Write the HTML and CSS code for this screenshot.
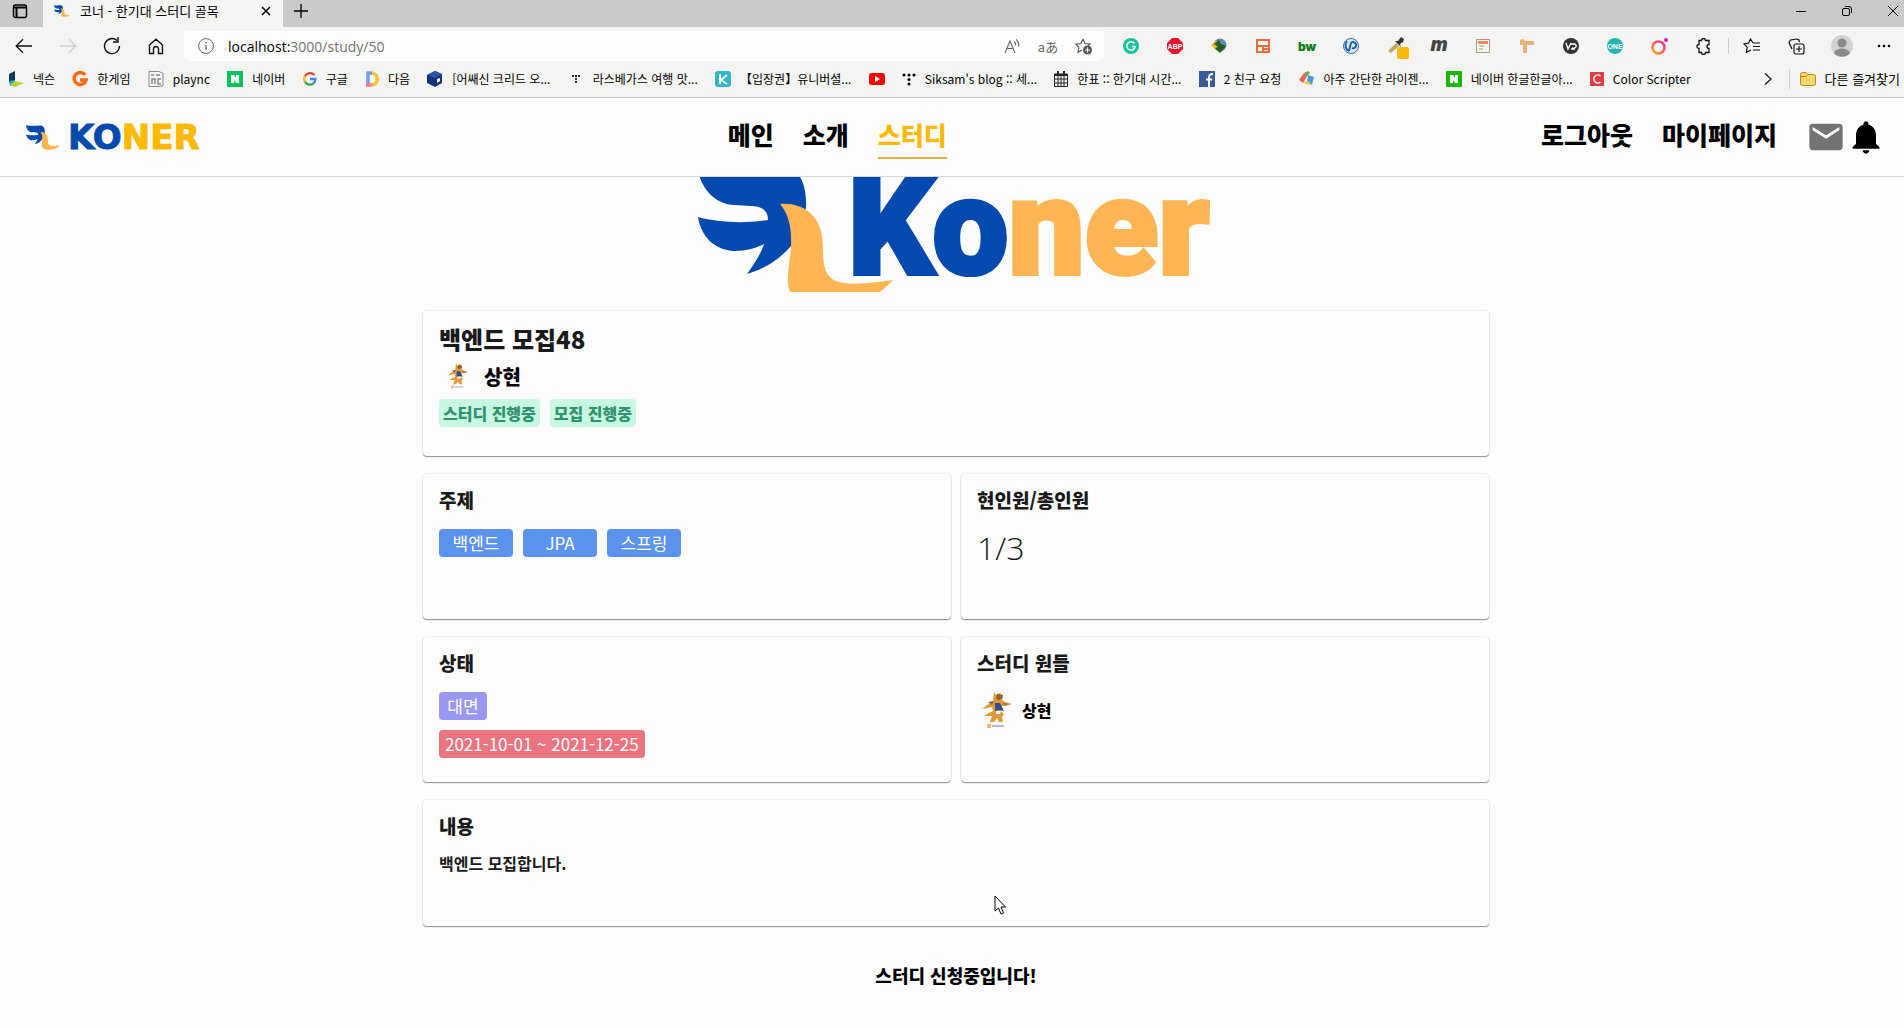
FILE: index.html
```html
<!DOCTYPE html>
<html lang="ko">
<head>
<meta charset="utf-8">
<title>코너 - 한기대 스터디 골목</title>
<link rel="stylesheet" href="styles.css">
</head>
<body>
<svg class="defs" aria-hidden="true">
  <symbol id="bird" viewBox="0 -14 196 142">
    <path fill="#0449ad" d="M0-14C2 8 16 26 37 27C50 28 60 27 66 31C70 34 71 38 71 42C45 46 20 44 1 39C4 59 18 72 37 73C50 73 59 70 67 66C64 76 57 86 50 96C68 91 84 80 94 68L109 30C110 10 104-12 84-12C50-10 20-9 0-14Z"/>
    <path fill="#ffb553" d="M83 26C104 24 122 36 125 58C127 72 124 88 132 98C142 110 172 105 196 102C183 116 168 126 138 128C112 129 92 124 91 105C90 90 95 76 94 60C94 46 90 34 83 26Z"/>
  </symbol>
  <symbol id="mascot" viewBox="0 0 32 38">
    <path fill="#e59a35" d="M13 1l2 3 4-2 3 3-1 4 3 2 7 2-6 2-5 0 0 5 3 3-2 3 1 5h-4l-2-4-3 4H9l2-6-8 0 5-3 4-2-1-4-5 1-5 1 5-4 6-3z"/>
    <path fill="#8a6236" d="M16 3l6 1-1 4-4 1-2-2zM7 11l6-1-2 4zM22 12l6 1-5 1z"/>
    <path fill="#2d4d94" d="M14 12l5 0 4 8-5-1-4 1z"/>
    <path fill="#fff" d="M15 20h5l-1 3h-4z"/>
    <path fill="#f5b27d" d="M6 33h4v4H6z"/><path fill="#b9bcd6" d="M11 34h12v2H11z"/>
  </symbol>
</svg>

<header class="browser">
  <div class="tabs">
    <button class="tab-menu" aria-label="탭 작업 메뉴"><svg width="16" height="16" viewBox="0 0 16 16" fill="none" stroke="#000" stroke-width="1.4"><rect x="1.500" y="2" width="13" height="12.500" rx="2"/><path d="M2 4.500h12M4.500 5v9" stroke-width="2"/></svg></button>
    <div class="tab">
      <svg class="tab-logo" width="16" height="14"><use href="#bird"/></svg>
      <span class="tab-title">코너 - 한기대 스터디 골목</span>
      <button aria-label="탭 닫기"><svg width="10" height="10" viewBox="0 0 10 10" stroke="#000" stroke-width="1.500"><path d="M1 1l8 8M9 1l-8 8"/></svg></button>
    </div>
    <button class="new-tab" aria-label="새 탭"><svg width="14" height="14" viewBox="0 0 14 14" stroke="#000" stroke-width="1.300"><path d="M7 0v14M0 7h14"/></svg></button>
    <div class="window-buttons">
      <button aria-label="최소화"><svg width="10" height="10" viewBox="0 0 10 10" stroke="#000"><path d="M0 5.500h10"/></svg></button>
      <button aria-label="복원"><svg width="10" height="10" viewBox="0 0 10 10" stroke="#000" fill="none"><rect x=".5" y="2.500" width="7" height="7" rx="1.500"/><path d="M3 .5h4a2.500 2.500 0 0 1 2.500 2.500v4"/></svg></button>
      <button aria-label="닫기"><svg width="10" height="10" viewBox="0 0 10 10" stroke="#000"><path d="M0 0l10 10M10 0L0 10"/></svg></button>
    </div>
  </div>

  <div class="toolbar">
    <div class="nav-buttons">
      <button aria-label="뒤로"><svg width="18" height="16" viewBox="0 0 18 16" fill="none" stroke="#111" stroke-width="1.300"><path d="M17 8H1.500M8 1.200L1.200 8 8 14.800"/></svg></button>
      <button aria-label="앞으로"><svg width="18" height="16" viewBox="0 0 18 16" fill="none" stroke="#ccc" stroke-width="1.300"><path d="M1 8h15.500M10 1.200L16.800 8 10 14.800"/></svg></button>
      <button aria-label="새로 고침"><svg width="18" height="18" viewBox="0 0 18 18" fill="none" stroke="#111" stroke-width="1.400"><path d="M16.500 9A7.500 7.500 0 1 1 14 3.500M15 0v5h-5"/></svg></button>
      <button aria-label="홈"><svg width="16" height="17" viewBox="0 0 16 17" fill="none" stroke="#111" stroke-width="1.400"><path d="M1.500 7L8 1.200 14.500 7v8.500h-4V11a2.500 2.500 0 0 0-5 0v4.500h-4z"/></svg></button>
    </div>
    <div class="address">
      <svg width="16" height="16" viewBox="0 0 16 16" fill="none" stroke="#666"><circle cx="8" cy="8" r="7.400"/><path d="M8 7v5M8 4v1.500" stroke-width="1.300"/></svg>
      <span class="url">localhost:<span class="path">3000/study/50</span></span>
      <button class="glyph" aria-label="소리내어 읽기"><svg width="16" height="16" viewBox="0 0 16 16" fill="none" stroke="#666" stroke-width="1.100"><path d="M1 15L6 3l5 12M3 10.500h6M10 3.500a4 4 0 0 1 1.500 4M12 1.500a7 7 0 0 1 2.500 7"/></svg></button>
      <button class="glyph" aria-label="번역">aあ</button>
      <button class="glyph" aria-label="즐겨찾기에 추가"><svg width="18" height="17" viewBox="0 0 18 17" fill="none" stroke="#555" stroke-width="1.100"><path d="M8 1l2 4.500 5 .5-3.500 3.500M7 12l-4 2.500.8-5L.8 6.200l5-.7L8 1"/><circle cx="12.500" cy="12" r="4.500" fill="#555" stroke="none"/><path d="M12.500 9.500v5M10 12h5" stroke="#fff"/></svg></button>
    </div>
    <div class="extensions">
      <button aria-label="Grammarly"><svg width="16" height="16" viewBox="0 0 16 16" fill="none"><circle cx="8" cy="8" r="8" fill="#15c39a"/><path d="M11.500 5.500a4.200 4.200 0 1 0 .7 3H9" stroke="#fff" stroke-width="1.500"/></svg></button>
      <button aria-label="Adblock Plus"><svg width="16" height="16" viewBox="0 0 16 16"><path d="M5 0h6l5 5v6l-5 5H5l-5-5V5z" fill="#e8142e"/><text x="8" y="10.500" text-anchor="middle" class="abp">ABP</text></svg></button>
      <button aria-label="다운로드 관리자"><svg width="16" height="16" viewBox="0 0 16 16"><circle cx="9" cy="7" r="6.500" fill="#5d88b5"/><path d="M0 7l5-4 3 1 1 8-3 1z" fill="#f0b92c"/><path d="M3 6l5-4 2 4 5 2-6 7-5-5 3-1z" fill="#255b1f"/></svg></button>
      <button aria-label="레이아웃"><svg width="14" height="14" viewBox="0 0 14 14" fill="none" stroke="#ee6c3c" stroke-width="2"><path d="M1 1h12v12H1zM1 7h12M7 7v6M7 10h6"/></svg></button>
      <button class="bw">bw</button>
      <button aria-label="동기화"><svg width="16" height="16" viewBox="0 0 16 16" fill="none"><circle cx="8" cy="8" r="7.500" fill="#dce8f2" stroke="#356ea8"/><path d="M6 13L8 5a3 3 0 1 1 1 5M4 3C1 7 3 12 6 13" stroke="#22609f" stroke-width="2"/></svg></button>
      <button class="dropper" aria-label="색상 추출"><svg width="22" height="22" viewBox="0 0 22 22"><path d="M1 14l8-8 3 3-8 7z" fill="#bba86c"/><path d="M8 4l3 0 3-4 3 2-1 3-3 2 1 3z" fill="#333"/><rect x="10" y="10" width="12" height="12" rx="2" fill="#ffb900"/></svg></button>
      <button class="m">m</button>
      <button aria-label="메모"><svg width="14" height="14" viewBox="0 0 14 14"><path fill="#f8f8ee" stroke="#aa9880" d="M.5.5h13v13H.5z"/><path d="M2 2h10v3H2z" fill="#ed876c"/><path d="M3 7h5M3 10h4" stroke="#87b775"/></svg></button>
      <button aria-label="도구"><svg width="14" height="14" viewBox="0 0 14 14"><path d="M0 1l3-1 2 2h9v4H7v8H3V6H0z" fill="#e7b17c"/></svg></button>
      <button aria-label="VD"><svg width="16" height="16" viewBox="0 0 16 16"><circle cx="8" cy="8" r="8" fill="#333"/><path d="M3 5l2 6 3-6M8 6h4c3 2 0 5-3 4M8 11h4" fill="none" stroke="#fff" stroke-width="1.400"/></svg></button>
      <button aria-label="ONE"><svg width="16" height="16" viewBox="0 0 16 16"><circle cx="8" cy="8" r="8" fill="#20b5b0"/><text x="8" y="11" text-anchor="middle" class="one">ONE</text></svg></button>
      <button aria-label="이미지 도구"><svg width="17" height="17" viewBox="0 0 17 17" fill="none"><defs><linearGradient id="ring" x1="1" y1="0" x2="0" y2="1"><stop stop-color="#e62a9b"/><stop offset="1" stop-color="#ffa51f"/></linearGradient></defs><circle cx="7.500" cy="9.500" r="6" stroke="url(#ring)" stroke-width="2.500"/><circle cx="15" cy="2" r="2" fill="#d81ba8"/></svg></button>
      <button aria-label="확장"><svg width="16" height="17" viewBox="0 0 16 17" fill="none" stroke="#111" stroke-width="1.300"><path d="M4 2.500h2.500a2 2 0 0 1 4 0H14v4a2 2 0 0 0 0 4v4h-3.500a2 2 0 0 1-4 0H4v-4a2 2 0 1 1 0-4z"/></svg></button>
    </div>
    <div class="profile">
      <button aria-label="즐겨찾기"><svg width="18" height="16" viewBox="0 0 18 16" fill="none" stroke="#111" stroke-width="1.200"><path d="M10 5L7.500 1 5.500 5.200 1 6l3.200 3.200-.7 5L8 12M10 5h7M10 8.500h7M10 12h7"/></svg></button>
      <button aria-label="컬렉션"><svg width="17" height="17" viewBox="0 0 17 17" fill="none" stroke="#111" stroke-width="1.200"><rect x="6" y="6" width="10" height="10" rx="2"/><path d="M11 8v6M8 11h6M4 11L1 4.500 2.500 2 9 1l2 1 .5 2"/></svg></button>
      <button aria-label="프로필"><svg width="22" height="22" viewBox="0 0 22 22"><circle cx="11" cy="11" r="11" fill="#d2d2d2"/><circle cx="11" cy="8" r="4.500" fill="#8b8b8b"/><path d="M3 18c2-6 14-6 16 0-4 5-12 5-16 0" fill="#8b8b8b"/></svg></button>
      <button aria-label="설정"><svg width="14" height="4" viewBox="0 0 14 4"><circle cx="2" cy="2" r="1.300"/><circle cx="7" cy="2" r="1.300"/><circle cx="12" cy="2" r="1.300"/></svg></button>
    </div>
  </div>

  <nav class="bookmarks" aria-label="즐겨찾기 모음">
    <div class="bookmark-list">
      <a href="#"><svg width="16" height="16" viewBox="0 0 16 16"><path fill="#0c3a58" d="M1 3l6-3v10l-6 1z"/><path fill="#15a6d8" d="M1 10l6-1v4l-5 2z"/><path fill="#b9d430" d="M7 10l9 2-9 4-5-2z"/></svg>넥슨</a>
      <a href="#"><svg width="16" height="16" viewBox="0 0 16 16" fill="none" stroke="#ff6a14" stroke-width="3.500"><path d="M13 4A6 6 0 1 0 14 9H8"/></svg>한게임</a>
      <a href="#"><svg width="16" height="16" viewBox="0 0 16 16" fill="none" stroke="#888"><path d="M1 .5h10l4 2v12l-4 1H1z"/><path d="M4 13V8h3v5M13 8h-3v5h3M3 4h3M8 4h4" stroke-width="1.500"/></svg>plaync</a>
      <a href="#"><svg width="16" height="16" viewBox="0 0 16 16"><path fill="#04c35b" d="M0 0h16v16H0z"/><path fill="#fff" d="M4 4h3l2 3V4h3v8H9L7 9v3H4z"/></svg>네이버</a>
      <a href="#"><svg width="14" height="14" viewBox="0 0 14 14" fill="none" stroke-width="2.300"><path stroke="#ea4335" d="M11.500 3A6 6 0 0 0 2 4"/><path stroke="#fbbc05" d="M2 4a6 6 0 0 0 0 6"/><path stroke="#34a853" d="M2 10a6 6 0 0 0 8.500 1.500"/><path stroke="#4285f4" d="M10.500 11.500C12 10 12.500 9 12.500 7H7"/></svg>구글</a>
      <a href="#"><svg width="14" height="16" viewBox="0 0 14 16" fill="none" stroke-width="3.500"><path stroke="#709cf4" d="M3 14V2h4"/><path stroke="#f7c431" d="M7 2c7 1 7 11 0 12"/><path stroke="#f18088" d="M7 14H1"/></svg>다음</a>
      <a href="#"><svg width="16" height="16" viewBox="0 0 16 16"><path fill="#17347a" d="M8 0l7 3v9l-7 4-8-4V4z"/><path fill="#2c58a7" d="M8 0l7 3-7 4-8-3z"/><path fill="#fff" d="M10 8l3-1v3l-3 2z"/></svg>[어쌔신 크리드 오...</a>
      <a href="#"><svg width="16" height="16" viewBox="0 0 16 16" fill="#333"><path d="M4 4h2v2H4zM7 4h2v2H7zM10 4h2v2h-2zM7 7h2v2H7zM7 10h2v2H7z"/></svg>라스베가스 여행 맛...</a>
      <a href="#"><svg width="16" height="16" viewBox="0 0 16 16"><rect width="16" height="16" rx="3" fill="#30b7cc"/><path d="M5 3v10M12 4L6 9l6 4" fill="none" stroke="#fff" stroke-width="2"/></svg>【입장권】유니버셜...</a>
      <a href="#" aria-label="YouTube"><svg width="16" height="12" viewBox="0 0 16 12"><rect width="16" height="12" rx="3" fill="#f00"/><path fill="#fff" d="M6 3l5 3-5 3z"/></svg></a>
      <a href="#"><svg width="14" height="14" viewBox="0 0 14 14"><circle cx="2" cy="3" r="1.500"/><circle cx="7" cy="3" r="1.500"/><circle cx="12" cy="3" r="1.500"/><circle cx="7" cy="7.500" r="1.500"/><circle cx="7" cy="12" r="1.500"/></svg>Siksam's blog :: 세...</a>
      <a href="#"><svg width="14" height="16" viewBox="0 0 14 16" fill="none" stroke="#222"><path d="M.5 3h13v12.500H.5zM.5 8h13M.5 12h13M4 5v10M7 5v10M10 5v10"/><path d="M1 4h12M4 0v3M10 0v3" stroke-width="2"/></svg>한표 :: 한기대 시간...</a>
      <a href="#"><svg width="16" height="16" viewBox="0 0 16 16"><path fill="#3b5998" d="M0 0h16v16H0z"/><path d="M10 16V6c0-2 1-3 4-3M7 8.500h6" fill="none" stroke="#fff" stroke-width="2"/></svg>2 친구 요청</a>
      <a href="#"><svg width="16" height="16" viewBox="0 0 16 16"><path fill="#69a85b" d="M5 2l4-2 2 2-4 4z"/><path fill="#e46953" d="M5 2l3 3-4 7-4-3z"/><path fill="#4b9ed6" d="M9 4l6 2-2 8-5-4z"/><path fill="#f2c84b" d="M5 10l5 1 2 3-6-1z"/></svg>아주 간단한 라이젠...</a>
      <a href="#"><svg width="16" height="16" viewBox="0 0 16 16"><rect width="16" height="16" rx="1" fill="#17b900"/><path fill="#fff" d="M4 4h3l2 3V4h3v8H9L7 9v3H4z"/></svg>네이버 한글한글아...</a>
      <a href="#"><svg width="14" height="14" viewBox="0 0 14 14"><path fill="#e13d45" d="M0 0h14v14H0z"/><path d="M10.500 4a4 4 0 1 0 0 6" fill="none" stroke="#fff" stroke-width="1.500"/></svg>Color Scripter</a>
    </div>
    <button class="more" aria-label="더 보기"><svg width="8" height="12" viewBox="0 0 8 12" fill="none" stroke="#111" stroke-width="1.200"><path d="M1 .5L7 6l-6 5.500"/></svg></button>
    <a class="folder" href="#"><svg width="16" height="14" viewBox="0 0 16 14"><path d="M.5 2.500a2 2 0 0 1 2-2H6l2 2h5.500a2 2 0 0 1 2 2v7a2 2 0 0 1-2 2h-11a2 2 0 0 1-2-2z" fill="#ffd569" stroke="#b88a1c"/><path d="M.5 4.500H6l2-2" fill="none" stroke="#b88a1c"/></svg>다른 즐겨찾기</a>
  </nav>
</header>

<header class="site-header">
  <div class="brand-side">
    <a class="brand" href="#"><svg width="34" height="25"><use href="#bird"/></svg><span><span class="blue">KO</span><span class="gold">NER</span></span></a>
  </div>
  <nav class="menu"><a href="#">메인</a><a href="#">소개</a><a class="active" href="#">스터디</a></nav>
  <nav class="account">
    <a href="#">로그아웃</a><a href="#">마이페이지</a>
    <div class="alerts">
      <button aria-label="쪽지"><svg width="40" height="40" viewBox="0 0 24 24" fill="#737373"><path d="M20 4H4c-1.100 0-2 .9-2 2v12c0 1.100.9 2 2 2h16c1.100 0 2-.9 2-2V6c0-1.100-.9-2-2-2zm0 4l-8 5-8-5V6l8 5 8-5v2z"/></svg></button>
      <button aria-label="알림"><svg width="40" height="40" viewBox="0 0 24 24"><path d="M12 22c1.100 0 2-.9 2-2h-4c0 1.100.9 2 2 2zm6-6v-5c0-3.070-1.640-5.640-4.500-6.320V4c0-.83-.67-1.500-1.500-1.500s-1.500.67-1.500 1.500v.68C7.630 5.360 6 7.920 6 11v5l-2 2v1h16v-1l-2-2z"/></svg></button>
    </div>
  </nav>
</header>

<main>
  <div class="hero">
    <svg width="518" height="115" viewBox="0 -1 518 115" role="img" aria-label="Koner">
      <use href="#bird" x="0" y="-14" width="196" height="142"/>
      <text x="151" y="96" class="wordmark"><tspan class="wm-blue">Ko</tspan><tspan class="wm-orange">ner</tspan></text>
    </svg>
  </div>

  <div class="study">
    <section class="card summary">
      <h1>백엔드 모집48</h1>
      <div class="owner"><svg width="22" height="26"><use href="#mascot"/></svg>상현</div>
      <div class="chips"><span class="badge">스터디 진행중</span><span class="badge">모집 진행중</span></div>
    </section>
    <section class="card half">
      <h2>주제</h2>
      <div class="chips"><span class="chip topic">백엔드</span><span class="chip topic">JPA</span><span class="chip topic">스프링</span></div>
    </section>
    <section class="card half">
      <h2>현인원/총인원</h2>
      <p class="count">1/3</p>
    </section>
    <section class="card half">
      <h2>상태</h2>
      <div class="chips stacked"><span class="chip mode">대면</span><span class="chip period">2021-10-01 ~ 2021-12-25</span></div>
    </section>
    <section class="card half">
      <h2>스터디 원들</h2>
      <div class="member"><svg width="32" height="38"><use href="#mascot"/></svg>상현</div>
    </section>
    <section class="card body">
      <h2>내용</h2>
      <p>백엔드 모집합니다.</p>
    </section>
  </div>
  <p class="notice">스터디 신청중입니다!</p>
</main>
<svg class="cursor" width="13" height="20" viewBox="0 0 13 20"><path d="M1 1v15l3.500-3 2.500 6 2.500-1-2.500-6h4.500z" fill="#fff" stroke="#000"/></svg>
</body>
</html>
```
FILE: styles.css
```css
* { box-sizing: border-box; }
body {
  margin: 0;
  background: #fdfdfd;
  color: #000;
  font-family: "Noto Sans CJK KR", sans-serif;
}
a { color: inherit; text-decoration: none; }
button { border: 0; padding: 0; background: none; font: inherit; color: inherit; display: flex; align-items: center; justify-content: center; }
h1, h2, p { margin: 0; }
svg { flex: none; }
.defs { position: absolute; width: 0; height: 0; }

/* Browser window */
.browser { background: #f4f4f2; border-bottom: 1px solid #c4c4ba; font-size: 12px; }
.tabs { display: flex; height: 27px; background: #cacaca; }
.tab-menu { width: 43px; padding: 0 3px 6px 0; }
.tab { display: flex; align-items: center; width: 240px; padding: 0 12px 6px 11px; background: #f4f4f2; gap: 10px; }
.tab-title { flex: 1; font-size: 13px; line-height: 18px; white-space: nowrap; }
.new-tab { width: 36px; padding-bottom: 6px; }
.window-buttons { display: flex; margin-left: auto; }
.window-buttons button { width: 46px; padding-bottom: 6px; }
.window-buttons button:last-child { width: 34px; padding-left: 12px; }

.toolbar { display: flex; align-items: center; height: 38px; }
.nav-buttons { display: flex; padding-left: 2px; width: 184px; }
.nav-buttons button { width: 44px; }
.address { flex: 1; display: flex; align-items: center; height: 30px; padding: 0 2px 0 14px; background: #fdfdfd; border-radius: 5px; }
.url { flex: 1; margin-left: 14px; font: 14px "Open Sans", sans-serif; }
.path { color: #737373; }
.glyph { width: 36px; color: #666; font-size: 13px; }
.extensions { display: flex; padding: 0 3px 0 5px; }
.extensions button { width: 44px; height: 22px; }
.abp { font: bold 7px "Liberation Sans", sans-serif; fill: #fff; }
.one { font: bold 7px "Liberation Sans", sans-serif; fill: #fff; }
.extensions .bw { font: 900 12px "Inter", sans-serif; color: #0a7a12; }
.extensions .m { font: italic 900 19px "Open Sans", sans-serif; color: #444; padding-bottom: 4px; }
.dropper svg { margin: 4px 0 0 6px; }
.profile { display: flex; align-items: center; border-left: 1px solid #ccc; height: 16px; }
.profile button { width: 45px; }
.profile button:last-child { width: 40px; }

.bookmarks { display: flex; align-items: center; height: 32px; padding: 0 4px 5px 8px; }
.bookmark-list { flex: 1; display: flex; justify-content: space-between; }
.bookmarks a { display: flex; align-items: center; gap: 9px; white-space: nowrap; line-height: 20px; }
.more { width: 98px; padding-left: 62px; padding-right: 6px; }
.bookmarks .folder { border-left: 1px solid #ccc; padding-left: 10px; font-size: 13px; }

/* Site header */
.site-header { display: flex; align-items: center; height: 79px; padding: 0 18px 0 26px; border-bottom: 1px solid #d8d8e0; font-weight: 900; font-size: 25px; line-height: 34px; }
.brand-side { width: calc(38% - 5px); display: flex; }
.brand { display: inline-flex; align-items: center; gap: 8px; font: bold 34px/40px "DejaVu Sans", sans-serif; -webkit-text-stroke: 1px; }
.blue { color: #0449ad; }
.gold { color: #ffb900; }
.menu { display: flex; gap: 29px; }
.menu a, .account > a { padding-bottom: 6px; }
.active { color: #ffb900; box-shadow: 0 2px 0 #e6ae3c; }
.account { display: flex; align-items: center; gap: 29px; margin-left: auto; }
.alerts { display: flex; }

/* Study page */
main { padding-left: 8px; }
.hero { display: flex; justify-content: center; overflow: hidden; }
.wordmark { font: 900 135px "Roboto", sans-serif; stroke-width: 4px; }
.wm-blue { fill: #0449ad; stroke: #0449ad; }
.wm-orange { fill: #ffb553; stroke: #ffb553; }
.study { display: grid; grid-template-columns: 1fr 1fr; gap: 18px 10px; width: 1066px; max-width: 100%; margin: 19px auto 0; }
.card {
  min-height: 145px;
  padding: 14px 16px;
  border-radius: 4px;
  box-shadow: 0 1px 1px #8f8f96, 0 0 2px #d6d6e4;
  color: #1a1a1a;
}
.summary, .body { grid-column: 1 / -1; }
.body { min-height: 126px; }
h1 { font-size: 24px; line-height: 28px; font-weight: 900; }
h2 { font-size: 19px; line-height: 24px; font-weight: 900; }
.owner { display: flex; align-items: center; gap: 15px; padding-left: 8px; margin: 6px 0; height: 34px; font-size: 20px; font-weight: 900; color: #000; }
.chips { display: flex; gap: 10px; }
.badge { padding: 0 4px; border-radius: 4px; background: #c8f8e2; color: #2f9270; font-size: 16px; line-height: 28px; font-weight: 900; }
.chip { min-width: 48px; padding: 0 6px; border-radius: 4px; color: #fff; font-size: 17px; line-height: 28px; text-align: center; }
.half .chips { margin-top: 17px; }
.topic { width: 74px; background: #5b93ee; }
.stacked { flex-direction: column; align-items: flex-start; }
.mode { background: #9a97f2; }
.period { background: #ea7580; }
.count { margin-top: 14px; font: 300 32px/44px "Open Sans", sans-serif; }
.member { display: flex; align-items: center; gap: 9px; margin: 16px 0 0 4px; font-size: 16px; font-weight: 900; color: #000; }
.body p { margin-top: 13px; font-size: 16px; line-height: 24px; font-weight: 700; }
.notice { margin: 36px 0 40px; text-align: center; font-size: 18px; line-height: 26px; font-weight: 900; }
.cursor { position: absolute; left: 994px; top: 895px; }
```
